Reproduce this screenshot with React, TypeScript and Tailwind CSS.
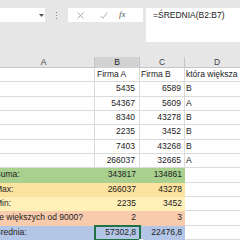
import React from "react";

type Row = {
    a?: string;
    b?: string;
    c?: string;
    d?: string;
    fill?: string;
    bLeft?: boolean;
    selected?: boolean;
};

const rows: Row[] = [
    {b: "Firma A", c: "Firma B", d: "która większa", bLeft: true},
    {b: "5435", c: "6589", d: "B"},
    {b: "54367", c: "5609", d: "A"},
    {b: "8340", c: "43278", d: "B"},
    {b: "2235", c: "3452", d: "B"},
    {b: "7403", c: "43268", d: "B"},
    {b: "266037", c: "32665", d: "A"},
    {a: "Suma:", b: "343817", c: "134861", fill: "bg-[#a9d08e]"},
    {a: "Max:", b: "266037", c: "43278", fill: "bg-[#fde3a0]"},
    {a: "Min:", b: "2235", c: "3452", fill: "bg-[#fff0b8]"},
    {a: "Ile większych od 9000?", b: "2", c: "3", fill: "bg-[#f8cbad]"},
    {a: "Średnia:", b: "57302,8", c: "22476,8", fill: "bg-[#b4c6e7]", selected: true},
];

const App = () => {
    return (
        <div className="w-[240px] h-[240px] overflow-hidden bg-[#e6e6e6] font-['Liberation_Sans',Arial,sans-serif] text-[8.5px] text-[#222]">
            {/* formula bar */}
            <div className="flex items-start h-[57px] pt-[8px]">
                <div className="w-[45px] h-[14px] bg-white flex items-center justify-end pr-[1px]">
                    <svg width="5" height="3" viewBox="0 0 5 3"><path d="M0 0h5L2.5 3z" fill="#555"/></svg>
                </div>
                <div className="w-[23px] h-[14px] flex flex-col items-center justify-center gap-[2px]">
                    <span className="w-[1px] h-[1px] bg-[#888]"/>
                    <span className="w-[1px] h-[1px] bg-[#888]"/>
                    <span className="w-[1px] h-[1px] bg-[#888]"/>
                </div>
                <div className="w-[75px] h-[14px] bg-white flex items-center">
                    <svg className="ml-[9px]" width="7" height="7" viewBox="0 0 7 7">
                        <path d="M0.5 0.5l6 6M6.5 0.5l-6 6" stroke="#9a9a9a" strokeWidth="0.8"/>
                    </svg>
                    <svg className="ml-[16px]" width="8" height="7" viewBox="0 0 8 7">
                        <path d="M0.5 3.8l2.3 2.5L7.5 0.5" stroke="#9a9a9a" strokeWidth="0.8" fill="none"/>
                    </svg>
                    <span className="ml-[11px] italic font-['Liberation_Serif',serif] text-[9px] text-[#555]">fx</span>
                </div>
                <div className="ml-[3px] flex-1 h-[34px] bg-white pl-[7px] pt-[2px] leading-[11px] text-[8.5px] text-[#222]">
                    =ŚREDNIA(B2:B7)
                </div>
            </div>

            {/* sheet */}
            <div className="-ml-[7px]">
                <div className="grid grid-cols-[102px_45px_45px_64px] h-[11px] leading-[11px] text-[#444] border-b border-[#c6c6c6]">
                    <div className="text-center border-r border-[#c6c6c6]">A</div>
                    <div className="text-center bg-[#d2d2d2] text-[#222] border-r border-[#c6c6c6]">B</div>
                    <div className="text-center border-r border-[#c6c6c6]">C</div>
                    <div className="text-center">D</div>
                </div>
                {rows.map((r, i) => (
                    <div key={i} className="grid grid-cols-[102px_45px_45px_64px] h-[14.33px] leading-[13px]">
                        <div className={`${r.fill ?? "bg-white border-r border-b border-[#dadada]"} pl-[2px] whitespace-nowrap overflow-hidden`}>
                            {r.a}
                        </div>
                        <div className={`relative ${r.fill ?? "bg-white border-r border-b border-[#dadada]"} ${r.bLeft ? "text-left pl-[2px]" : "text-right pr-[4px]"} whitespace-nowrap`}>
                            {r.b}
                            {r.selected && (
                                <>
                                    <div className="absolute -left-[1px] -top-[1px] -right-[1px] -bottom-[1px] border-2 border-[#217346]"/>
                                    <div className="absolute -right-[3px] -bottom-[3px] w-[4px] h-[4px] bg-[#217346] border border-white"/>
                                </>
                            )}
                        </div>
                        <div className={`${r.fill ?? "bg-white border-r border-b border-[#dadada]"} ${r.bLeft ? "text-left pl-[1px]" : "text-right pr-[3px]"} whitespace-nowrap`}>
                            {r.c}
                        </div>
                        <div className="bg-white border-r border-b border-[#dadada] pl-[1px] whitespace-nowrap overflow-hidden">
                            {r.d}
                        </div>
                    </div>
                ))}
            </div>
        </div>
    );
};

export default App;
